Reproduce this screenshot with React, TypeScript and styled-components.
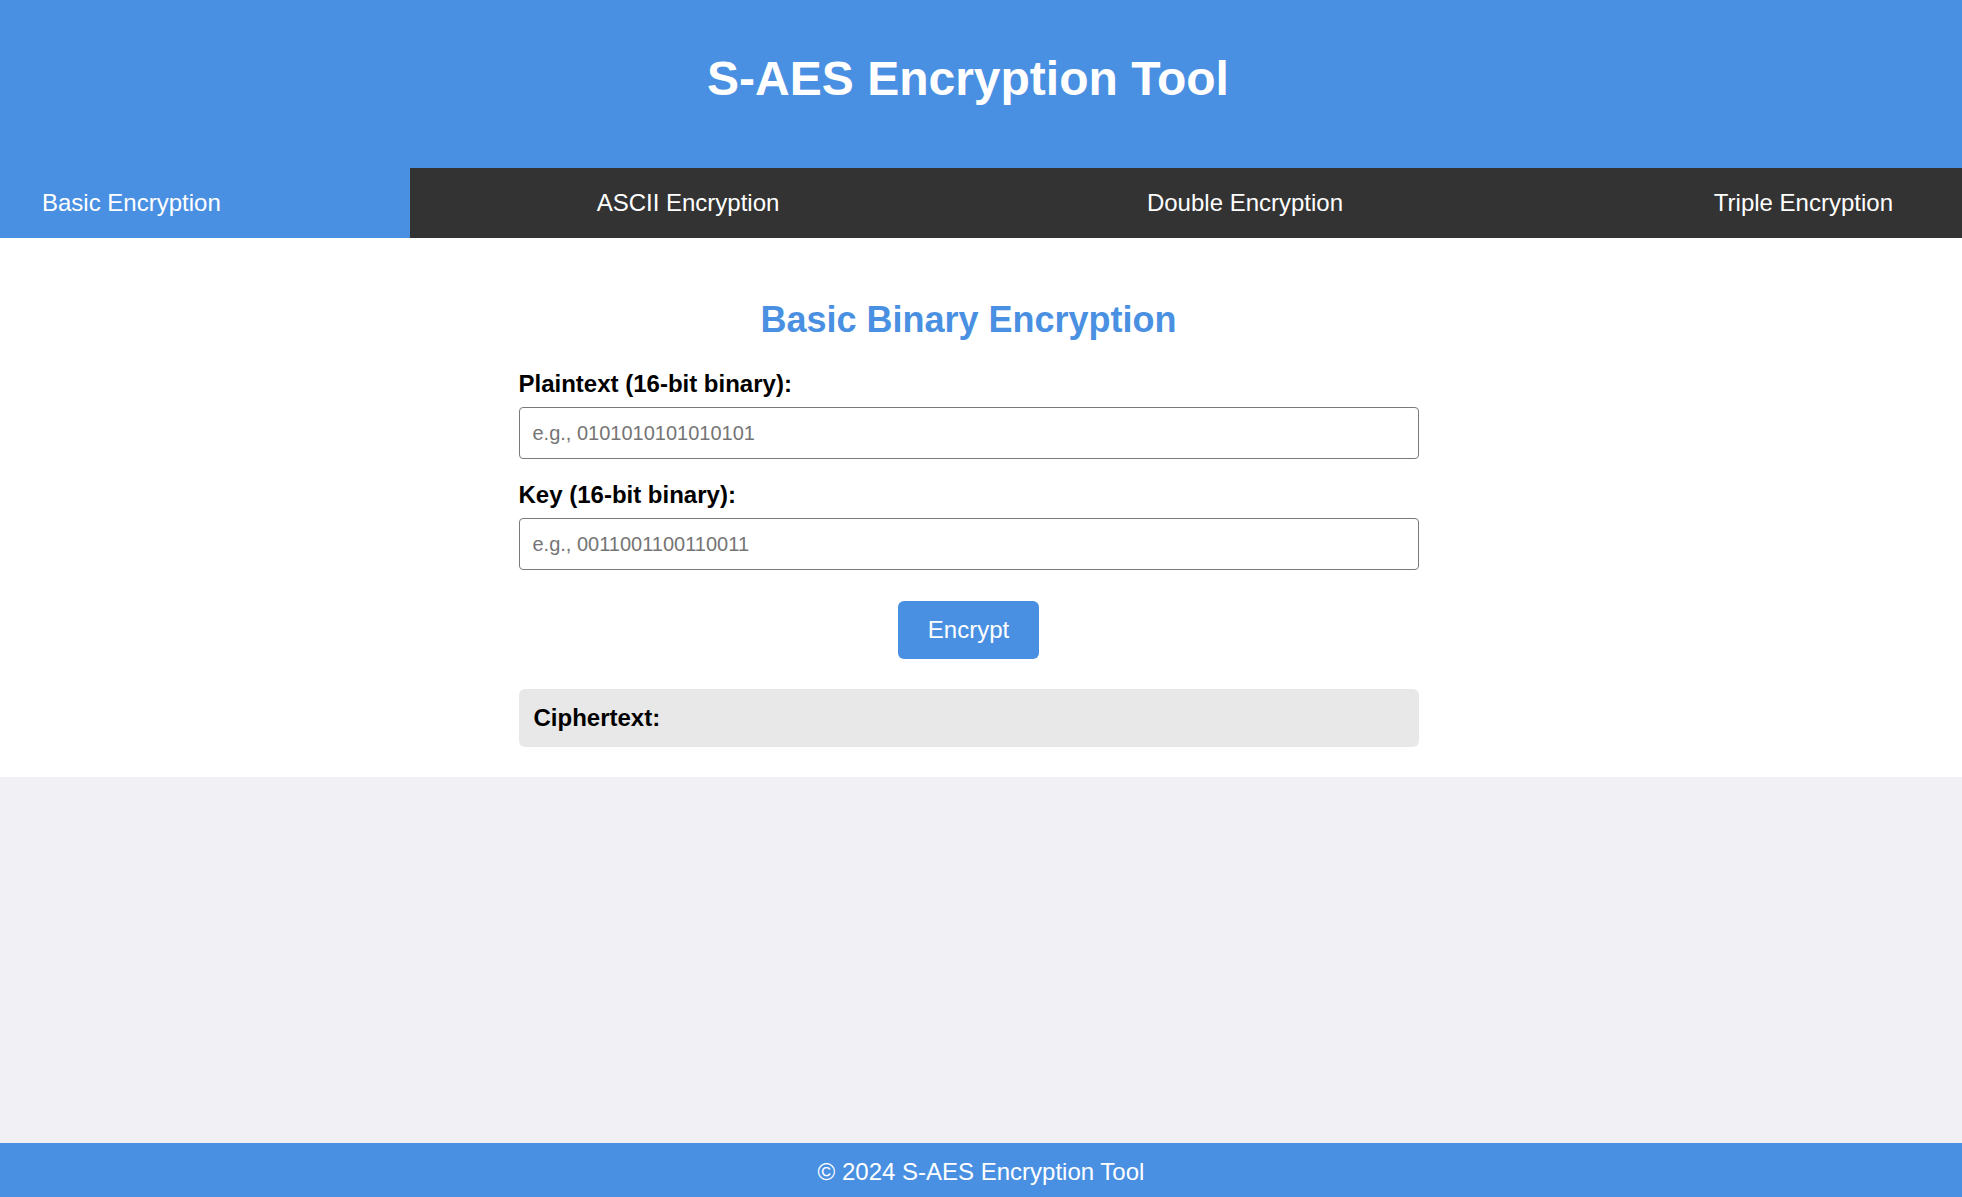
import React from 'react';
import styled, { createGlobalStyle } from 'styled-components';

const BLUE = '#4a90e2';

const GlobalStyle = createGlobalStyle`
    html, body {
        margin: 0;
        padding: 0;
    }
    body {
        background-color: #f0f0f5;
        font-family: "Liberation Sans", Arial, sans-serif;
    }
    * {
        box-sizing: border-box;
    }
`;

const Page = styled.div`
    min-height: 100vh;
    display: flex;
    flex-direction: column;
`;

const Header = styled.header`
    background-color: ${BLUE};
    color: white;
    text-align: center;
    padding: 51px 26px 62px 0;

    h1 {
        margin: 0;
        font-size: 48px;
        font-weight: bold;
    }
`;

const Nav = styled.nav`
    display: grid;
    grid-template-columns: 410px 556px 558px 1fr;
    height: 70px;
    background-color: #333;
`;

type Align = 'start' | 'center' | 'end';

const Tab = styled.button<{ $active?: boolean; $align: Align; $pad?: string }>`
    display: flex;
    align-items: center;
    justify-content: ${(p) => p.$align};
    height: 100%;
    padding: ${(p) => p.$pad || '0'};
    border: none;
    background-color: ${(p) => (p.$active ? BLUE : 'transparent')};
    color: white;
    font-family: "Liberation Sans", Arial, sans-serif;
    font-size: 24px;
    cursor: pointer;
`;

const Main = styled.main`
    background-color: white;
    padding: 61px 25px 30px 0;
`;

const Panel = styled.section`
    width: 900px;
    margin: 0 auto;

    h2 {
        margin: 0 0 29px;
        text-align: center;
        color: ${BLUE};
        font-size: 36px;
        font-weight: bold;
    }
`;

const Field = styled.div<{ $last?: boolean }>`
    margin-bottom: ${(p) => (p.$last ? '31px' : '22px')};

    label {
        display: block;
        margin-bottom: 9px;
        font-size: 24px;
        line-height: 28px;
        font-weight: bold;
        color: #000;
    }
`;

const TextInput = styled.input`
    display: block;
    width: 100%;
    padding: 13px 13px;
    border: 1px solid #7a7a7a;
    border-radius: 4px;
    font-family: "Liberation Sans", Arial, sans-serif;
    font-size: 20px;
    line-height: 24px;
    color: #000;

    &::placeholder {
        color: #757575;
    }
`;

const Actions = styled.div`
    display: flex;
    justify-content: center;
    margin-bottom: 30px;
`;

const Button = styled.button`
    padding: 15px 30px;
    border: none;
    border-radius: 6px;
    background-color: ${BLUE};
    color: white;
    font-family: "Liberation Sans", Arial, sans-serif;
    font-size: 24px;
    cursor: pointer;
`;

const Result = styled.div`
    padding: 15px;
    border-radius: 6px;
    background-color: #e8e8e8;
    font-size: 24px;
    font-weight: bold;
    color: #000;
`;

const Filler = styled.div`
    flex: 1;
`;

const Footer = styled.footer`
    background-color: ${BLUE};
    color: white;
    text-align: center;
    padding: 15px 0 11px;
    font-size: 24px;
`;

const tabs: { label: string; align: Align; pad?: string }[] = [
    { label: 'Basic Encryption', align: 'start', pad: '0 0 0 42px' },
    { label: 'ASCII Encryption', align: 'center' },
    { label: 'Double Encryption', align: 'center' },
    { label: 'Triple Encryption', align: 'end', pad: '0 69px 0 0' },
];

export default function App() {
    const [active, setActive] = React.useState(0);

    return (
        <Page>
            <GlobalStyle />
            <Header>
                <h1>S-AES Encryption Tool</h1>
            </Header>
            <Nav>
                {tabs.map((tab, index) => (
                    <Tab
                        key={tab.label}
                        $active={index === active}
                        $align={tab.align}
                        $pad={tab.pad}
                        onClick={() => setActive(index)}
                    >
                        {tab.label}
                    </Tab>
                ))}
            </Nav>
            <Main>
                <Panel>
                    <h2>Basic Binary Encryption</h2>
                    <Field>
                        <label htmlFor="plaintext">Plaintext (16-bit binary):</label>
                        <TextInput id="plaintext" placeholder="e.g., 0101010101010101" />
                    </Field>
                    <Field $last>
                        <label htmlFor="key">Key (16-bit binary):</label>
                        <TextInput id="key" placeholder="e.g., 0011001100110011" />
                    </Field>
                    <Actions>
                        <Button>Encrypt</Button>
                    </Actions>
                    <Result>Ciphertext:</Result>
                </Panel>
            </Main>
            <Filler />
            <Footer>© 2024 S-AES Encryption Tool</Footer>
        </Page>
    );
}
